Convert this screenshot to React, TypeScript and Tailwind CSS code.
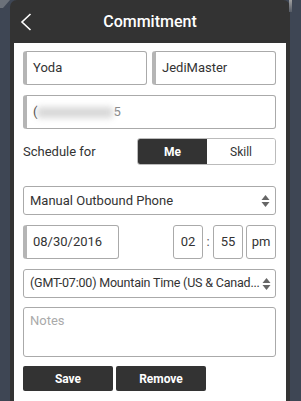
import React from "react";

const Arrows = () => (
  <svg width="9" height="14" viewBox="0 0 9 14" className="shrink-0">
    <path d="M4.5 1 L8.5 6 L0.5 6 Z" fill="#666" />
    <path d="M4.5 13 L8.5 8 L0.5 8 Z" fill="#666" />
  </svg>
);

export default function App() {
  const font = { fontFamily: "Roboto, 'Liberation Sans', Arial, sans-serif" };
  return (
    <div
      className="relative w-[301px] h-[401px] bg-[#3e4654] flex pl-[10px] overflow-hidden"
      style={font}
    >
      <svg className="absolute left-0 top-0" width="14" height="8" viewBox="0 0 14 8">
        <path d="M0 0 L10 0 L3 8 L0 8 Z" fill="#6b717a" />
      </svg>
      <div className="absolute right-[9px] top-0 w-[3px] h-[12px] bg-gradient-to-b from-[#a0a0a0] to-[#555b66]" />
      <div className="w-[280px] h-full bg-[#333333] rounded-t-[7px] flex flex-col">
        <div className="h-[43px] shrink-0 relative flex items-center justify-center">
          <svg
            className="absolute left-[10px] top-[13px]"
            width="12"
            height="18"
            viewBox="0 0 12 18"
          >
            <path d="M10.5 1 L2 9 L10.5 17" fill="none" stroke="#ffffff" strokeWidth="1.6" />
          </svg>
          <span className="text-white text-[16px] font-medium leading-none">Commitment</span>
        </div>
        <div className="flex-1 bg-white mx-[4px] pl-[9px] pr-[10px] pt-[8px] flex flex-col text-[13px] text-[#333]">
          <div className="flex gap-[5px]">
            <div className="w-[124px] h-[34px] border border-[#aaa] border-l-[4px] border-l-[#b5b5b5] rounded-[3px] flex items-center pl-[6px]">
              Yoda
            </div>
            <div className="flex-1 h-[34px] border border-[#aaa] border-l-[4px] border-l-[#b5b5b5] rounded-[3px] flex items-center pl-[6px]">
              JediMaster
            </div>
          </div>
          <div className="mt-[10px] h-[34px] border border-[#aaa] border-l-[4px] border-l-[#b5b5b5] rounded-[3px] flex items-center pl-[6px]">
            <span>(</span>
            <div className="w-[76px] h-[11px] bg-[#d8d8d8] blur-[3px] rounded-[2px]" />
            <span className="text-[#888]">5</span>
          </div>
          <div className="mt-[9px] flex items-center justify-between h-[27px]">
            <span>Schedule for</span>
            <div className="w-[139px] h-[27px] flex border border-[#bbb] rounded-[3px] overflow-hidden text-[12px]">
              <div className="w-[69px] bg-[#333] text-white font-bold flex items-center justify-center">
                Me
              </div>
              <div className="flex-1 bg-white flex items-center justify-center text-[#333]">Skill</div>
            </div>
          </div>
          <div className="mt-[21px] h-[29px] border border-[#aaa] rounded-[3px] flex items-center pl-[6px] pr-[5px] justify-between">
            <span>Manual Outbound Phone</span>
            <Arrows />
          </div>
          <div className="mt-[10px] flex items-center h-[34px]">
            <div className="w-[96px] h-[34px] border border-[#aaa] border-l-[4px] border-l-[#b5b5b5] rounded-[3px] flex items-center pl-[6px]">
              08/30/2016
            </div>
            <div className="ml-auto w-[30px] h-[34px] border border-[#aaa] rounded-[3px] flex items-center justify-center">
              02
            </div>
            <span className="w-[10px] text-center text-[#555]">:</span>
            <div className="w-[30px] h-[34px] border border-[#aaa] rounded-[3px] flex items-center justify-center">
              55
            </div>
            <div className="ml-[3px] w-[30px] h-[34px] border border-[#aaa] rounded-[3px] flex items-center justify-center">
              pm
            </div>
          </div>
          <div className="mt-[10px] h-[29px] border border-[#aaa] rounded-[3px] flex items-center pl-[6px] pr-[5px] justify-between gap-[2px]">
            <span className="whitespace-nowrap text-[12.5px] tracking-[-0.2px]">
              (GMT-07:00) Mountain Time (US &amp; Canad...
            </span>
            <Arrows />
          </div>
          <div className="mt-[9px] h-[50px] border border-[#aaa] rounded-[3px] pl-[6px] pt-[6px] text-[#aaa] leading-none">
            Notes
          </div>
          <div className="mt-[9px] flex gap-[3px]">
            <div className="w-[90px] h-[25px] bg-[#333] rounded-[2px] text-white font-bold text-[12px] flex items-center justify-center">
              Save
            </div>
            <div className="w-[90px] h-[25px] bg-[#333] rounded-[2px] text-white font-bold text-[12px] flex items-center justify-center">
              Remove
            </div>
          </div>
        </div>
      </div>
    </div>
  );
}
